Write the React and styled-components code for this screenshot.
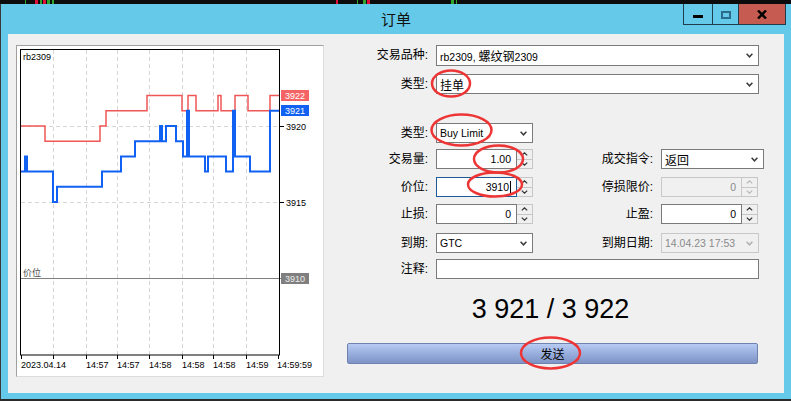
import React from 'react';
import styled, { createGlobalStyle } from 'styled-components';

const GlobalStyle = createGlobalStyle`
  html, body { margin: 0; padding: 0; background: #0c0c0c; }
  body { font-family: "Liberation Sans", "Noto Sans CJK SC", sans-serif; }
  * { box-sizing: border-box; }
`;

const Page = styled.div`
  position: relative;
  width: 791px;
  height: 401px;
  overflow: hidden;
  background: #0c0c0c;
  display: flex;
  flex-direction: column;
`;

const TopStrip = styled.svg`
  display: block;
  flex: 0 0 4px;
`;

const Window = styled.div`
  flex: 1;
  display: flex;
  flex-direction: column;
  background: #65cae9;
  border-left: 1px solid #3a3a3a;
  border-bottom: 2px solid #2a2a2a;
  padding: 0 7px 6px 7px;
`;

const TitleBar = styled.div`
  flex: 0 0 30px;
  display: grid;
  grid-template-columns: 1fr auto 1fr;
  align-items: center;
`;

const Title = styled.div`
  grid-column: 2;
  font-family: "Noto Sans CJK SC", sans-serif;
  font-size: 15px;
  line-height: 30px;
  color: #111;
`;

const WinButtons = styled.div`
  grid-column: 3;
  justify-self: end;
  align-self: start;
  margin-right: -2px;
  height: 21px;
  display: flex;
  border: 1px solid #1f3d4b;
  border-top: none;
`;

const WinButton = styled.div`
  width: ${p => p.$w}px;
  height: 100%;
  display: flex;
  align-items: center;
  justify-content: center;
  background: ${p => (p.$close ? '#c65b51' : 'transparent')};
  & + & { border-left: 1px solid #1f3d4b; }
`;

const MinIcon = styled.div`
  width: 10px;
  height: 3px;
  margin-top: 4px;
  background: #000;
`;

const MaxIcon = styled.div`
  width: 10px;
  height: 8px;
  margin-top: 1px;
  border: 2px solid #2a6c8a;
`;

const Content = styled.div`
  flex: 1;
  background: #f0f0f0;
  display: flex;
  align-items: flex-start;
  padding: 11px 0 0 8px;
  gap: 23px;
`;

const ChartPanel = styled.div`
  flex: 0 0 308px;
  height: 332px;
  border: 1px solid;
  border-color: #a0a0a0 #dcdcdc #dcdcdc #a0a0a0;
  background: #fff;
`;

const ChartSvg = styled.svg`
  display: block;
  font-family: "Liberation Sans", "Noto Sans CJK SC", sans-serif;
`;

const Form = styled.div`
  width: 411px;
  display: flex;
  flex-direction: column;
`;

const Row = styled.div`
  display: flex;
  align-items: stretch;
  height: ${p => p.$h || 20}px;
  margin-top: ${p => p.$mt || 0}px;
`;

const Label = styled.div`
  flex: 0 0 ${p => p.$w || 81}px;
  margin-right: 8px;
  text-align: right;
  font-size: 12px;
  line-height: 20px;
  color: #000;
  white-space: nowrap;
`;

const Combo = styled.div`
  flex: 0 0 ${p => p.$w}px;
  height: 100%;
  display: flex;
  align-items: center;
  justify-content: space-between;
  padding: 0 5px 0 3px;
  border: 1px solid ${p => (p.$disabled ? '#c8c8c8' : '#7a7a7a')};
  background: ${p => (p.$disabled ? '#f0f0f0' : '#fff')};
  color: ${p => (p.$disabled ? '#8a8a8a' : '#000')};
`;

const FieldText = styled.span`
  font-size: ${p => (p.$cjk ? 12 : 10.5)}px;
  white-space: nowrap;
`;

const Cjk = styled.span`
  font-size: 12px;
`;

const ChevronSvg = styled.svg`
  display: block;
  flex: 0 0 auto;
`;

const Spin = styled.div`
  flex: 0 0 97px;
  height: 100%;
  display: flex;
`;

const TextBox = styled.div`
  flex: 0 0 81px;
  height: 100%;
  display: flex;
  align-items: center;
  justify-content: flex-end;
  padding-right: 5px;
  font-size: 10.5px;
  border: 1px solid ${p => (p.$focus ? '#1e5a96' : p.$disabled ? '#c8c8c8' : '#7a7a7a')};
  background: ${p => (p.$disabled ? '#f0f0f0' : '#fff')};
  color: ${p => (p.$disabled ? '#8a8a8a' : '#000')};
`;

const Caret = styled.span`
  display: inline-block;
  width: 1px;
  height: 13px;
  margin-left: 1px;
  background: #000;
`;

const Spinner = styled.div`
  flex: 0 0 16px;
  display: flex;
  flex-direction: column;
`;

const SpinHalf = styled.div`
  flex: 1;
  display: flex;
  align-items: center;
  justify-content: center;
  border: 1px solid #c6c6c6;
  border-left: none;
  & + & { border-top: none; }
  background: #f0f0f0;
`;

const SideLabel = styled(Label)`
  flex-basis: 120px;
`;

const Quote = styled.div`
  margin-top: 15px;
  text-align: center;
  font-family: "Liberation Sans", sans-serif;
  font-size: 27px;
  line-height: 30px;
  color: #000;
  padding-right: 4px;
`;

const SendButton = styled.div`
  margin-top: 19px;
  height: 21px;
  display: flex;
  align-items: center;
  justify-content: center;
  font-size: 12px;
  color: #000;
  border: 1px solid #6f82b0;
  border-radius: 2px;
  background: linear-gradient(#b7cbf3, #98aedc 50%, #7f94c6);
`;

const Overlay = styled.svg`
  position: absolute;
  left: 0;
  top: 0;
  pointer-events: none;
`;

const Chevron = ({ color = '#3c3c3c' }) => (
  <ChevronSvg width="7" height="5" viewBox="0 0 7 5">
    <path d="M0.6 0.8 L3.5 3.8 L6.4 0.8" fill="none" stroke={color} strokeWidth="1.5" />
  </ChevronSvg>
);

const Arrow = ({ up, color }) => (
  <ChevronSvg width="7" height="4" viewBox="0 0 7 4">
    <path d={up ? 'M0.8 3.4 L3.5 0.8 L6.2 3.4' : 'M0.8 0.6 L3.5 3.2 L6.2 0.6'} fill="none" stroke={color} strokeWidth="1.2" />
  </ChevronSvg>
);

const SpinField = ({ value, focus, disabled }) => {
  const c = disabled ? '#b8b8b8' : '#333';
  return (
    <Spin>
      <TextBox $focus={focus} $disabled={disabled}>
        {value}
        {focus && <Caret />}
      </TextBox>
      <Spinner>
        <SpinHalf><Arrow up color={c} /></SpinHalf>
        <SpinHalf><Arrow color={c} /></SpinHalf>
      </Spinner>
    </Spin>
  );
};

const py = p => 126 - (p - 3920) * 15.2;

const stepPath = (segs, end) => {
  let d = `M${segs[0][0]} ${py(segs[0][1]).toFixed(1)}`;
  for (let i = 1; i < segs.length; i++) {
    d += ` H${segs[i][0]} V${py(segs[i][1]).toFixed(1)}`;
  }
  return d + ` H${end}`;
};

const redSegs = [[21, 3920], [45, 3919], [100, 3920], [106, 3921], [147, 3922], [182, 3921], [188, 3922], [196, 3921], [218, 3922], [221, 3921], [235, 3922], [248, 3921], [270, 3922]];
const blueSegs = [[21, 3917], [25, 3918], [27, 3917], [53, 3915], [57, 3916], [102, 3917], [121, 3918], [135, 3919], [160, 3920], [162, 3919], [166, 3920], [176, 3919], [183, 3918], [187, 3921], [189, 3918], [205, 3917], [208, 3918], [226, 3917], [233, 3921], [235, 3918], [250, 3917], [270, 3921]];

const gridX = [53, 86, 117, 149, 182, 213, 246];
const tickX = [21, 53, 86, 117, 149, 182, 213, 246, 278];
const times = [[21, '2023.04.14'], [86, '14:57'], [117, '14:57'], [149, '14:58'], [182, '14:58'], [213, '14:58'], [246, '14:59'], [277, '14:59:59']];

const Chart = () => (
  <ChartSvg width="306" height="330" viewBox="17 46 306 330">
    <rect x="20.5" y="49.5" width="259" height="305.5" fill="#fff" />
    {gridX.map(x => (
      <line key={x} x1={x + 0.5} y1="50" x2={x + 0.5} y2="355" stroke="#d6d6d6" strokeDasharray="4 3" />
    ))}
    {[126, 202].map(y => (
      <line key={y} x1="21" y1={y + 0.5} x2="279" y2={y + 0.5} stroke="#d6d6d6" strokeDasharray="4 3" />
    ))}
    <line x1="21" y1="278.5" x2="281" y2="278.5" stroke="#7f7f7f" />
    <path d={stepPath(redSegs, 279)} fill="none" stroke="#f05656" strokeWidth="1.5" />
    <path d={stepPath(blueSegs, 279)} fill="none" stroke="#1162f3" strokeWidth="2" />
    <rect x="20.5" y="49.5" width="259" height="305.5" fill="none" stroke="#000" />
    <text x="23" y="59.5" fontSize="9" fill="#000">rb2309</text>
    <text x="23" y="275.5" fontSize="9" fill="#4a4a4a">价位</text>
    <line x1="279" y1="126.5" x2="284" y2="126.5" stroke="#000" />
    <line x1="279" y1="202.5" x2="284" y2="202.5" stroke="#000" />
    <text x="286" y="129.5" fontSize="9" fill="#000">3920</text>
    <text x="286" y="205.5" fontSize="9" fill="#000">3915</text>
    <rect x="281" y="90" width="28" height="11" fill="#f46464" />
    <text x="285" y="99" fontSize="9" fill="#fff">3922</text>
    <rect x="281" y="105" width="28" height="11" fill="#1162f3" />
    <text x="285" y="114" fontSize="9" fill="#fff">3921</text>
    <rect x="281" y="273" width="28" height="11" fill="#7f7f7f" />
    <text x="285" y="282" fontSize="9" fill="#eee">3910</text>
    {tickX.map(x => (
      <line key={x} x1={x + 0.5} y1="355" x2={x + 0.5} y2="359" stroke="#000" />
    ))}
    {times.map(([x, t], i) => (
      <text key={i} x={x} y="368" fontSize="9" fill="#000">{t}</text>
    ))}
  </ChartSvg>
);

const stripMarks = [[25, 1, '#2fa52f'], [35, 3, '#e0103a'], [40, 2, '#2fa52f'], [43, 3, '#e0103a'], [47, 3, '#2fa52f'], [52, 2, '#2fa52f'], [336, 2, '#e0103a'], [357, 1, '#2fa52f'], [363, 3, '#2fa52f'], [367, 3, '#e0103a'], [451, 3, '#2fa52f'], [456, 1, '#2fa52f']];

export default function App() {
  return (
    <>
      <GlobalStyle />
      <Page>
        <TopStrip width="791" height="4" viewBox="0 0 791 4">
          <rect width="791" height="4" fill="#0c0c0c" />
          {stripMarks.map(([x, w, c], i) => (
            <rect key={i} x={x} y="0" width={w} height="4" fill={c} />
          ))}
        </TopStrip>
        <Window>
          <TitleBar>
            <Title>订单</Title>
            <WinButtons>
              <WinButton $w={28}><MinIcon /></WinButton>
              <WinButton $w={26}><MaxIcon /></WinButton>
              <WinButton $w={47} $close>
                <svg width="10" height="9" viewBox="0 0 10 9">
                  <path d="M1 0.5 L9 8.5 M9 0.5 L1 8.5" stroke="#000" strokeWidth="2.4" />
                </svg>
              </WinButton>
            </WinButtons>
          </TitleBar>
          <Content>
            <ChartPanel>
              <Chart />
            </ChartPanel>
            <Form>
              <Row $h={21}>
                <Label>交易品种:</Label>
                <Combo $w={323}>
                  <FieldText>rb2309, <Cjk>螺纹钢</Cjk>2309</FieldText>
                  <Chevron />
                </Combo>
              </Row>
              <Row $mt={8}>
                <Label>类型:</Label>
                <Combo $w={323}>
                  <FieldText $cjk>挂单</FieldText>
                  <Chevron />
                </Combo>
              </Row>
              <Row $mt={29}>
                <Label>类型:</Label>
                <Combo $w={97}>
                  <FieldText>Buy Limit</FieldText>
                  <Chevron />
                </Combo>
              </Row>
              <Row $mt={6}>
                <Label>交易量:</Label>
                <SpinField value="1.00" />
                <SideLabel>成交指令:</SideLabel>
                <Combo $w={103}>
                  <FieldText $cjk>返回</FieldText>
                  <Chevron />
                </Combo>
              </Row>
              <Row $mt={8}>
                <Label>价位:</Label>
                <SpinField value="3910" focus />
                <SideLabel>停损限价:</SideLabel>
                <SpinField value="0" disabled />
              </Row>
              <Row $mt={7}>
                <Label>止损:</Label>
                <SpinField value="0" />
                <SideLabel>止盈:</SideLabel>
                <SpinField value="0" />
              </Row>
              <Row $mt={9}>
                <Label>到期:</Label>
                <Combo $w={97}>
                  <FieldText>GTC</FieldText>
                  <Chevron />
                </Combo>
                <SideLabel>到期日期:</SideLabel>
                <Combo $w={98} $disabled>
                  <FieldText>14.04.23 17:53</FieldText>
                  <Chevron color="#b0b0b0" />
                </Combo>
              </Row>
              <Row $mt={6}>
                <Label>注释:</Label>
                <Combo $w={323} />
              </Row>
              <Quote>3 921 / 3 922</Quote>
              <SendButton>发送</SendButton>
            </Form>
          </Content>
        </Window>
        <Overlay width="791" height="401" viewBox="0 0 791 401">
          <g fill="none" stroke="#ee3535" strokeWidth="2.5">
            <ellipse cx="451" cy="83.5" rx="19" ry="13" />
            <ellipse cx="461.5" cy="130" rx="30" ry="15.5" />
            <ellipse cx="498.5" cy="159" rx="24.5" ry="13.5" />
            <ellipse cx="495" cy="184.5" rx="27" ry="12" />
            <ellipse cx="550.5" cy="353" rx="29.5" ry="15.5" />
          </g>
        </Overlay>
      </Page>
    </>
  );
}
